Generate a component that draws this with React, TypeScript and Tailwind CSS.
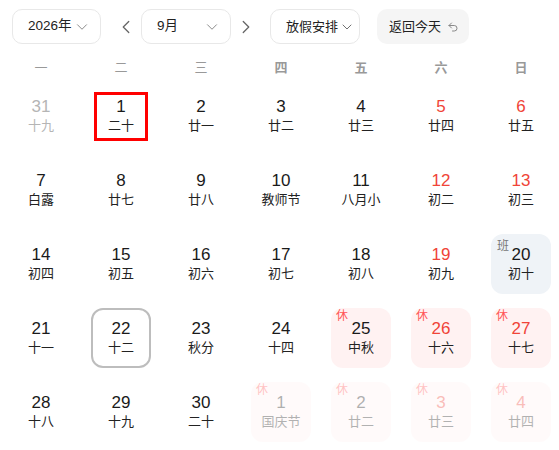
import { ChevronDown, ChevronLeft, ChevronRight, Undo2 } from 'lucide-react';

type Day = {
  d: number;
  lunar: string;
  red?: boolean;
  other?: boolean;
  rest?: boolean;
  work?: boolean;
  today?: boolean;
  picked?: boolean;
};

const weeks: Day[][] = [
  [
    { d: 31, lunar: '十九', other: true },
    { d: 1, lunar: '二十', picked: true },
    { d: 2, lunar: '廿一' },
    { d: 3, lunar: '廿二' },
    { d: 4, lunar: '廿三' },
    { d: 5, lunar: '廿四', red: true },
    { d: 6, lunar: '廿五', red: true },
  ],
  [
    { d: 7, lunar: '白露' },
    { d: 8, lunar: '廿七' },
    { d: 9, lunar: '廿八' },
    { d: 10, lunar: '教师节' },
    { d: 11, lunar: '八月小' },
    { d: 12, lunar: '初二', red: true },
    { d: 13, lunar: '初三', red: true },
  ],
  [
    { d: 14, lunar: '初四' },
    { d: 15, lunar: '初五' },
    { d: 16, lunar: '初六' },
    { d: 17, lunar: '初七' },
    { d: 18, lunar: '初八' },
    { d: 19, lunar: '初九', red: true },
    { d: 20, lunar: '初十', work: true },
  ],
  [
    { d: 21, lunar: '十一' },
    { d: 22, lunar: '十二', today: true },
    { d: 23, lunar: '秋分' },
    { d: 24, lunar: '十四' },
    { d: 25, lunar: '中秋', rest: true },
    { d: 26, lunar: '十六', rest: true, red: true },
    { d: 27, lunar: '十七', rest: true, red: true },
  ],
  [
    { d: 28, lunar: '十八' },
    { d: 29, lunar: '十九' },
    { d: 30, lunar: '二十' },
    { d: 1, lunar: '国庆节', rest: true, other: true },
    { d: 2, lunar: '廿二', rest: true, other: true },
    { d: 3, lunar: '廿三', rest: true, other: true, red: true },
    { d: 4, lunar: '廿四', rest: true, other: true, red: true },
  ],
];

const weekdays = ['一', '二', '三', '四', '五', '六', '日'];

function Select({ label, width }: { label: string; width: string }) {
  return (
    <div
      className={`${width} shrink-0 h-[35px] flex items-center justify-between pl-[15px] pr-[9px] border border-[#e8e8e8] rounded-[10px] bg-white text-[13.5px] text-[#222] whitespace-nowrap`}
    >
      <span>{label}</span>
      <ChevronDown className="shrink-0 w-[18px] h-[18px] text-[#888]" strokeWidth={1.3} />
    </div>
  );
}

function Cell({ day }: { day: Day }) {
  let box = 'w-[60px] h-[60px] rounded-[12px]';
  if (day.picked) box = 'w-[54px] h-[49px] border-[3px] border-[#f00]';
  else if (day.today) box += ' border-2 border-[#bdbdbd]';
  else if (day.work) box += ' bg-[#eff3f7]';
  else if (day.rest) box += ' bg-[#fff2f2]';

  let numColor = day.red ? 'text-[#f04438]' : 'text-[#1a1a1a]';
  let lunarColor = 'text-[#222]';
  if (day.other && !day.rest) {
    numColor = 'text-[#b5b5b5]';
    lunarColor = 'text-[#b5b5b5]';
  }

  return (
    <div className="flex items-center justify-center h-[74px]">
      <div className={`relative flex flex-col items-center justify-center ${box} ${day.other && day.rest ? 'opacity-35' : ''}`}>
        {day.rest && (
          <span className="absolute left-[5px] top-[2px] text-[12px] leading-none text-[#f55]">休</span>
        )}
        {day.work && (
          <span className="absolute left-[6px] top-[6px] text-[12px] leading-none text-[#777]">班</span>
        )}
        <span className={`text-[17px] leading-[20px] ${numColor}`}>{day.d}</span>
        <span className={`text-[13px] leading-[18px] ${lunarColor}`}>{day.lunar}</span>
      </div>
    </div>
  );
}

export default function App() {
  return (
    <div
      className="w-[559px] h-[450px] overflow-hidden bg-white"
      style={{ fontFamily: '"Liberation Sans", "Noto Sans CJK SC", sans-serif' }}
    >
      <div className="flex items-center h-[35px] mt-[9px] pl-[12px]">
        <Select label="2026年" width="w-[89px]" />
        <ChevronLeft className="shrink-0 w-[22px] h-[22px] text-[#666] ml-[14px] mr-[4px]" strokeWidth={1.4} />
        <Select label="9月" width="w-[90px]" />
        <ChevronRight className="shrink-0 w-[22px] h-[22px] text-[#666] ml-[4px] mr-[13px]" strokeWidth={1.4} />
        <div className="shrink-0 w-[90px] h-[35px] flex items-center pl-[15px] border border-[#e8e8e8] rounded-[10px] text-[13px] text-[#222] whitespace-nowrap">
          <span>放假安排</span>
          <ChevronDown className="shrink-0 ml-[1px] w-[16px] h-[16px] text-[#666]" strokeWidth={1.4} />
        </div>
        <div className="shrink-0 ml-[17px] w-[92px] h-[35px] flex items-center pl-[12px] gap-[6px] rounded-[10px] bg-[#f5f5f5] text-[13px] text-[#222] whitespace-nowrap">
          <span>返回今天</span>
          <Undo2 className="shrink-0 w-[12px] h-[12px] text-[#888]" strokeWidth={2} />
        </div>
      </div>

      <div className="ml-[1px] grid grid-cols-[repeat(7,80px)] h-[22px] mt-[13px]">
        {weekdays.map((w, i) => (
          <div
            key={w}
            className={`flex items-center justify-center text-[13px] text-[#999] ${i >= 3 ? 'font-semibold' : ''}`}
          >
            {w}
          </div>
        ))}
      </div>

      <div className="ml-[1px] grid grid-cols-[repeat(7,80px)]">
        {weeks.flat().map((day, i) => (
          <Cell key={i} day={day} />
        ))}
      </div>
    </div>
  );
}
